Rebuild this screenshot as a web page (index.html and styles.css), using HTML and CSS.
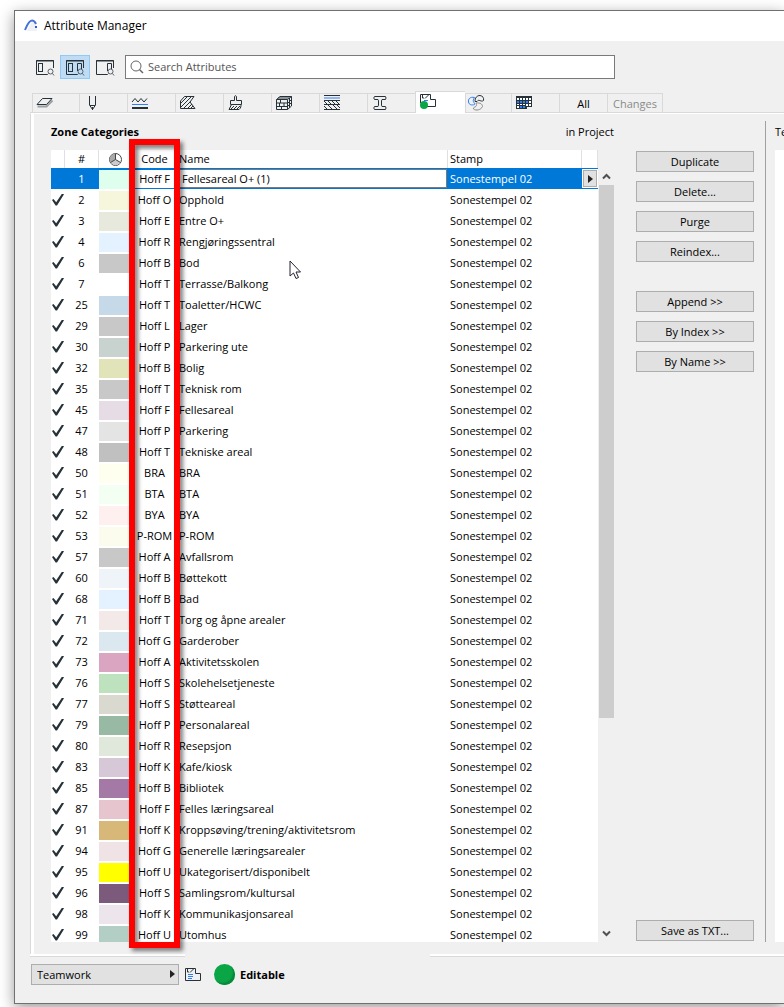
FILE: index.html
```html
<!DOCTYPE html>
<html lang="en">
<head>
  <meta charset="UTF-8" />
  <title>Attribute Manager</title>
  <link rel="stylesheet" href="styles.css">
</head>
<body>
  <div class="window">
    <header class="title-bar">
      <svg class="app-logo" width="14" height="14" viewBox="0 0 14 14" aria-hidden="true">
        <path d="M3 12C5 8 6 4 9 3L13 8V12Z" fill="#eef1f6" />
        <path d="M1 11C3 6 5 1.500 8 1.500C10.500 1.500 11 3 12 5" fill="none" stroke="#4672d8" stroke-width="2" />
        <rect x="11" y="7" width="2" height="2" fill="#2c5fd0" />
      </svg>
      <h1>Attribute Manager</h1>
    </header>

    <div class="toolbar">
      <div class="view-buttons" role="group" aria-label="View">
        <button type="button" aria-label="Left list">
          <svg width="20" height="18" viewBox="0 0 20 18">
            <path d="M12 15.500H1.500V1.500H18.500V9M1 2H19" class="ink" />
            <rect x="3.500" y="4.500" width="4" height="8" class="ink" />
            <circle cx="15.500" cy="12.500" r="2.500" class="thin" /><path d="M13.500 14.500L12 16M17.500 14.500L19 16.500" class="thin" />
          </svg>
        </button>
        <button type="button" class="active" aria-label="Both lists">
          <svg width="20" height="18" viewBox="0 0 20 18">
            <path d="M12 15.500H1.500V1.500H18.500V9M1 2H19" class="ink" />
            <rect x="3.500" y="4.500" width="4" height="8" class="ink" />
            <path d="M12.500 12V4.500H16.500V10" class="ink" />
            <circle cx="15.500" cy="12.500" r="2.500" class="thin" /><path d="M13.500 14.500L12 16M17.500 14.500L19 16.500" class="thin" />
          </svg>
        </button>
        <button type="button" aria-label="Right list">
          <svg width="20" height="18" viewBox="0 0 20 18">
            <path d="M12 15.500H1.500V1.500H18.500V9M1 2H19" class="ink" />
            <path d="M12.500 12V4.500H16.500V10" class="ink" />
            <circle cx="15.500" cy="12.500" r="2.500" class="thin" /><path d="M13.500 14.500L12 16M17.500 14.500L19 16.500" class="thin" />
          </svg>
        </button>
      </div>
      <label class="search">
        <svg width="14" height="14" viewBox="0 0 14 14" aria-hidden="true">
          <circle cx="6" cy="6" r="5" fill="none" stroke="#666" /><path d="M9.500 9.500L13 13" stroke="#666" stroke-width="1.500" />
        </svg>
        <input type="search" placeholder="Search Attributes" aria-label="Search Attributes">
      </label>
    </div>

    <nav class="tabs" aria-label="Attribute types">
      <button type="button" class="first" aria-label="Layers">
        <svg width="18" height="16" viewBox="0 0 18 16">
          <path d="M1.500 11.500H10.500L16.500 5.500" fill="none" stroke="#9aa0a4" stroke-width="2" />
          <path d="M6.500 3.500H16L10.500 9.500H1Z" class="ink" />
        </svg>
      </button>
      <button type="button" class="pen" aria-label="Pens">
        <svg width="18" height="16" viewBox="0 0 18 16">
          <path d="M5.500 1V10L8.500 14.500L11.500 10V1M6 10.500H11M8.500 12V15" class="ink" />
        </svg>
      </button>
      <button type="button" aria-label="Line types">
        <svg width="18" height="16" viewBox="0 0 18 16">
          <path d="M1 7L4 3.500L7 7L10 3.500L13 7L16 3.500" class="ink" />
          <path d="M1 9.500H17" stroke="#2d7ff9" /><path d="M1 13H17" stroke="#263238" stroke-width="2" />
        </svg>
      </button>
      <button type="button" aria-label="Fills">
        <svg width="18" height="16" viewBox="0 0 18 16">
          <path d="M5.500 1.500H15L11 7L16 13.500H1.500V6Z" class="ink" />
          <path d="M2 8L8 2M2 12L12 2M5 13L12 6M9 13L13 9M12 13L14 11" class="ink" />
        </svg>
      </button>
      <button type="button" aria-label="Surfaces">
        <svg width="18" height="16" viewBox="0 0 18 16">
          <path d="M7.500 5.500V1.500C8 .5 9 .5 9.500 1.500V5.500H14.500V9.500H3.500V5.500H7.500M4.500 9.500L2 14.500H12C14 13 14 11 14 9.500M4 14L7 11M7 14L10 11M10 14L13 11" class="ink" />
        </svg>
      </button>
      <button type="button" aria-label="Building materials">
        <svg width="18" height="16" viewBox="0 0 18 16">
          <path d="M1.500 4.500H12.500V14.500H1.500ZM1.500 4.500L5 1.500H16.500L12.500 4.500M16.500 1.500V11L12.500 14.500M1.500 8H12.500M1.500 11.500H12.500M5.500 4.500V8M9 8V11.500M4.500 8V11.500M6.500 11.500V14.500M3 3H14.500V13M13 8L16 5M13 11L16 8" class="ink" />
        </svg>
      </button>
      <button type="button" aria-label="Composites">
        <svg width="18" height="16" viewBox="0 0 18 16">
          <path d="M1 .5H17M1 5.500H17M1 9.500H17M1 14.500H17M1 6L4 9M5 6L8 9M9 6L12 9M13 6L16 9M1 11L4 14M5 10L9 14M10 10L14 14M14 10L17 13" class="ink" />
          <path d="M1 3H17" stroke="#2d7ff9" />
        </svg>
      </button>
      <button type="button" aria-label="Profiles">
        <svg width="18" height="16" viewBox="0 0 18 16">
          <path d="M3.500 1.500H14.500Q15.500 3 14.500 4.500H11Q10.500 5 10.500 6V10Q10.500 11 11 11.500H14.500Q15.500 13 14.500 14.500H3.500Q2 13 3.500 11.500H7Q7.500 11 7.500 10V6Q7.500 5 7 4.500H3.500Q2 3 3.500 1.500Z" class="ink" />
        </svg>
      </button>
      <button type="button" class="active" aria-label="Zone categories" aria-current="page">
        <svg width="18" height="16" viewBox="0 0 18 16">
          <path d="M1.500 10V1.500H11.500V6.500H16.500V13.500H8M3.500 2V5H5M6 5.500L10 1.500" class="ink" />
          <path d="M5 7.500H9" stroke="#2d7ff9" /><circle cx="5" cy="12" r="4" fill="#0aa545" />
        </svg>
      </button>
      <button type="button" class="mep" aria-label="MEP systems">
        <svg width="18" height="16" viewBox="0 0 18 16">
          <path d="M7.500 2.500C3 1.500 1 4 1.500 7C2 10 5 10.500 7.500 9.500C8 7 4.500 7.500 7.500 2.500Z" fill="none" stroke="#2d7ff9" />
          <path d="M8 6.500C8 2.500 10 .5 13 .5C16 1 17 3 16.500 5.500C14 7.500 12 3.500 10 6.500Z" class="ink" />
          <path d="M9 8C13 7.500 15.500 9 15.500 11.500C14 15 9 16 6.500 14C6 11 11 13 9 8Z" fill="none" stroke="#888" />
        </svg>
      </button>
      <button type="button" aria-label="Operation profiles">
        <svg width="18" height="16" viewBox="0 0 18 16">
          <path d="M1 1H17V12H12V14H1Z" fill="#263238" />
          <path d="M2 3h2v2H2zM5 3h2v2H5zM8 3h2v2H8zM11 3h2v2h-2zM14 3h2v2h-2zM2 9h2v1H2zM2 11h2v2H2z" fill="#fff" />
          <path d="M2 6h2v2H2zM5 6h2v2H5zM8 6h2v2H8zM11 6h2v2h-2zM5 11h2v2H5zM8 11h2v2H8z" fill="#2d7ff9" />
          <path d="M14 6h2v2h-2zM5 9h2v1H5zM8 9h2v1H8zM11 9h2v2h-2zM14 9h2v2h-2z" fill="#fff" />
        </svg>
      </button>
      <button type="button" class="text-tab">All</button>
      <button type="button" class="text-tab wide" disabled>Changes</button>
    </nav>

    <main class="panel">
      <section class="list-pane">
        <div class="pane-title"><h2>Zone Categories</h2><span>in Project</span></div>
        <div class="list">
          <div class="list-view">
            <table>
              <colgroup>
                <col class="col-check"><col class="col-id"><col class="col-color"><col class="col-code">
                <col><col class="col-stamp"><col class="col-pop">
              </colgroup>
              <thead>
                <tr>
                  <th></th>
                  <th class="ruled center">#</th>
                  <th class="ruled center">
                    <svg width="13" height="13" viewBox="0 0 13 13" role="img" aria-label="Color">
                      <circle cx="6.500" cy="6.500" r="6" fill="#fff" stroke="#444" />
                      <path d="M6.500 6.500V.5A6 6 0 0 0 1.500 9.500Z" fill="#aaa" /><path d="M6.500 6.500L1.500 9.500A6 6 0 0 0 11.500 9.500Z" fill="#ccc" />
                      <path d="M6.500 .5V6.500L1.500 9.500M6.500 6.500L11.500 9.500" fill="none" stroke="#444" />
                    </svg>
                  </th>
                  <th class="center code">Code</th>
                  <th>Name</th>
                  <th class="ruled stamp-head">Stamp</th>
                  <th class="ruled last"></th>
                </tr>
              </thead>
              <tbody id="zones"></tbody>
            </table>
          </div>
          <div class="scrollbar" aria-hidden="true">
            <svg width="9" height="7" viewBox="0 0 9 7"><path d="M1 5.500L4.500 2L8 5.500" fill="none" stroke="#505050" stroke-width="2" /></svg>
            <div class="track"><div class="thumb"></div></div>
            <svg width="9" height="7" viewBox="0 0 9 7"><path d="M1 1.500L4.500 5L8 1.500" fill="none" stroke="#505050" stroke-width="2" /></svg>
          </div>
          <div class="highlight"></div>
          <svg class="cursor" width="13" height="20" viewBox="0 0 13 20" aria-hidden="true">
            <path d="M1 1V16L4.500 13L7 18.500L9.500 17.500L7 12H11.500Z" fill="#fff" stroke="#223" />
          </svg>
        </div>
      </section>

      <div class="actions">
        <button type="button">Duplicate</button>
        <button type="button">Delete...</button>
        <button type="button">Purge</button>
        <button type="button">Reindex...</button>
        <button type="button" class="group-start">Append &gt;&gt;</button>
        <button type="button">By Index &gt;&gt;</button>
        <button type="button">By Name &gt;&gt;</button>
        <button type="button" class="save">Save as TXT...</button>
      </div>

      <section class="target-pane">
        <div class="pane-title"><span>Te</span></div>
        <div class="target-list"></div>
      </section>
    </main>
    <div class="panel-edge"><div class="edge-left"></div><div class="edge-right"></div></div>

    <footer class="status-bar">
      <div class="mode">
        <select aria-label="Mode"><option>Teamwork</option></select>
        <svg width="5" height="8" viewBox="0 0 5 8" aria-hidden="true"><path d="M0 0L5 4L0 8Z" fill="#222" /></svg>
      </div>
      <svg class="zone-icon" width="18" height="16" viewBox="0 0 18 16" aria-hidden="true">
        <path d="M1.500 1.500H11.500V6.500H16.500V13.500H1.500ZM3.500 2V5H5M6 5.500L10 1.500" class="ink" />
        <path d="M4 7.500H9M4 9.500H9M4 11.500H8" stroke="#2d7ff9" />
      </svg>
      <span class="status-dot"></span>
      <strong>Editable</strong>
    </footer>
  </div>
  <script src="script.js"></script>
</body>
</html>
```

FILE: styles.css
```css
* {
  box-sizing: border-box;
}

body {
  margin: 0;
  height: 100vh;
  padding: 10px 0 3px 14px;
  display: flex;
  overflow: hidden;
  background: #fff;
  color: #000;
  font-family: "Open Sans", "Noto Sans", sans-serif;
  font-size: 11px;
  line-height: 16px;
}

button,
input,
select {
  font: inherit;
  color: inherit;
}

h1,
h2 {
  margin: 0;
  font-size: 12px;
  font-weight: 400;
}

.ink {
  fill: none;
  stroke: #263238;
}

.thin {
  fill: none;
  stroke: #55606a;
}

.window {
  flex: 1;
  min-width: 0;
  display: flex;
  flex-direction: column;
  background: #f0f0f0;
  border: 1px solid #707070;
  border-right: 0;
  box-shadow: 0 4px 14px rgba(0, 0, 0, 0.4);
}

.title-bar {
  height: 30px;
  padding-left: 9px;
  display: flex;
  align-items: center;
  gap: 6px;
  background: #fff;
}

/* Toolbar */
.toolbar {
  display: flex;
  align-items: center;
  gap: 5px;
  padding: 14px 169px 0 15px;
}

.view-buttons {
  display: flex;
}

.view-buttons button {
  width: 30px;
  height: 24px;
  padding: 3px 4px;
  background: none;
  border: 1px solid transparent;
}

.view-buttons svg {
  display: block;
}

.view-buttons .active {
  background: #bfdcf4;
  border-color: #90c8f6;
}

.search {
  flex: 1;
  height: 24px;
  padding: 0 4px;
  display: flex;
  align-items: center;
  gap: 4px;
  background: #fff;
  border: 1px solid #7a7a7a;
}

.search input {
  flex: 1;
  padding: 0;
  border: 0;
  outline: 0;
  background: none;
}

.search input::placeholder {
  color: #555;
  opacity: 1;
}

/* Tabs */
.tabs {
  display: flex;
  align-items: flex-end;
  margin: 12px 0 0 15px;
  padding-left: 2px;
  border-bottom: 1px solid #d9d9d9;
}

.tabs button {
  width: 48px;
  height: 19px;
  padding: 0 0 0 3px;
  display: flex;
  align-items: center;
  background: #f0f0f0;
  border: solid #d9d9d9;
  border-width: 1px 0 0 1px;
}

.tabs .first {
  width: 47px;
}

.tabs .pen {
  padding-left: 4px;
}

.tabs .active {
  height: 22px;
  width: 50px;
  margin-bottom: -1px;
  padding-bottom: 4px;
  background: #fff;
}

.tabs .mep {
  width: 46px;
  padding-left: 1px;
}

.tabs .text-tab {
  justify-content: center;
  padding: 2px 0 0;
}

.tabs .wide {
  width: 56px;
  border-right-width: 1px;
  color: #8a8a8a;
}

/* Panel */
.panel {
  flex: 1;
  min-height: 0;
  display: flex;
  margin-left: 15px;
  padding: 7px 0 12px 17px;
  border-left: 1px solid #d9d9d9;
  border-top: 1px solid #fff;
  box-shadow: inset 3px 0 #fff;
}

.list-pane {
  flex: 1;
  min-width: 0;
  display: flex;
  flex-direction: column;
  padding-left: 3px;
}

.pane-title {
  height: 29px;
  padding-top: 3px;
  display: flex;
  justify-content: space-between;
}

.pane-title h2 {
  font-size: 11px;
  font-weight: 700;
}

.list {
  position: relative;
  flex: 1;
  min-height: 0;
  display: flex;
}

.list-view {
  flex: 1;
  min-width: 0;
  overflow: hidden;
  background: #fff;
}

table {
  width: 100%;
  table-layout: fixed;
  border-collapse: separate;
  border-spacing: 0;
}

.col-check { width: 13px; }
.col-id { width: 34px; }
.col-color { width: 34px; }
.col-code { width: 47px; }
.col-stamp { width: 134px; }
.col-pop { width: 17px; }

th,
td {
  padding: 0;
  text-align: left;
  font-weight: 400;
  white-space: nowrap;
}

th {
  height: 18px;
}

th svg {
  display: block;
  margin: 0 auto;
}

td {
  height: 21px;
}

.ruled {
  border-left: 1px solid #e0e0e0;
}

.last {
  border-right: 1px solid #e0e0e0;
}

.center {
  text-align: center;
}

.code {
  padding-right: 2px;
}

.id {
  padding-left: 1px;
}

.stamp-head {
  padding-left: 2px;
}

.stamp {
  padding-left: 3px;
}

.tick {
  appearance: none;
  display: block;
  width: 12px;
  height: 12px;
  margin: 0 0 0 1px;
}

.tick:checked {
  background: #263238;
  clip-path: polygon(0 55%, 12% 45%, 35% 72%, 84% 0, 100% 6%, 42% 100%, 30% 100%);
}

.swatch {
  height: 19px;
  margin: 2px 0 0 1px;
}

/* Row being edited */
.selected td {
  background: #0078d7;
  color: #fff;
}

.selected .code {
  background: #fff;
  color: #000;
  border: solid #0078d7;
  border-width: 2px 0 1px;
}

.selected input {
  display: block;
  width: 100%;
  height: 19px;
  padding: 0 2px;
  background: #fff;
  border: 1px solid #7a7a7a;
  outline: 0;
  color: #000;
}

.popup {
  display: flex;
  align-items: center;
  justify-content: center;
  width: 14px;
  height: 17px;
  margin-left: 2px;
  padding: 0;
  background: #e1e1e1;
  border: 1px solid #adadad;
  box-shadow: 0 0 0 1px #fff;
}

.scrollbar {
  width: 15px;
  margin: 18px 0 0 1px;
  display: flex;
  flex-direction: column;
  align-items: center;
  padding: 5px 0;
}

.track {
  flex: 1;
  align-self: stretch;
  margin: 5px 0;
}

.thumb {
  height: 72%;
  background: #cdcdcd;
}

.highlight {
  position: absolute;
  top: -11px;
  bottom: -6px;
  left: 78px;
  width: 51px;
  border: 6px solid #f00;
  filter: drop-shadow(3px 3px 2px rgba(0, 0, 0, 0.5));
}

.cursor {
  position: absolute;
  top: 110px;
  left: 238px;
}

/* Buttons between the lists */
.actions {
  width: 118px;
  margin: 30px 11px 0 22px;
  display: flex;
  flex-direction: column;
  gap: 9px;
}

.actions button {
  height: 21px;
  padding: 0;
  background: #e1e1e1;
  border: 1px solid #adadad;
}

.actions .group-start {
  margin-top: 20px;
}

.actions .save {
  margin-top: auto;
  margin-bottom: 1px;
}

.target-pane {
  width: 19px;
  display: flex;
  flex-direction: column;
  padding-left: 9px;
  border-left: 1px solid #a0a0a0;
  overflow: hidden;
}

.target-list {
  flex: 1;
  background: #fff;
}

.panel-edge {
  display: flex;
  justify-content: space-between;
  margin-left: 15px;
}

.edge-left,
.edge-right {
  height: 3px;
  background: #fff;
  border-bottom: 1px solid #d9d9d9;
}

.edge-left {
  width: 155px;
}

.edge-right {
  width: 354px;
}

/* Status bar */
.status-bar {
  display: flex;
  align-items: center;
  padding: 7px 0 18px 16px;
}

.mode {
  position: relative;
  width: 148px;
}

.mode select {
  appearance: none;
  display: block;
  width: 100%;
  height: 21px;
  padding: 0 5px;
  background: #e1e1e1;
  border: 1px solid #adadad;
  border-radius: 0;
}

.mode svg {
  position: absolute;
  top: 6px;
  right: 4px;
}

.zone-icon {
  margin: 0 12px 0 5px;
}

.status-dot {
  width: 21px;
  height: 21px;
  margin-right: 5px;
  border-radius: 50%;
  background: #0aa545;
  box-shadow: inset -2px -2px 1px #078a3a;
}
```

FILE: script.js
```js
// index, code, name, color
const zones = [
  [1, 'Hoff F', 'Fellesareal O+ (1)', '#dfffee'],
  [2, 'Hoff O', 'Opphold', '#f6f6dc'],
  [3, 'Hoff E', 'Entre O+', '#e7e9dd'],
  [4, 'Hoff R', 'Rengjøringssentral', '#e4f2ff'],
  [6, 'Hoff B', 'Bod', '#c8c8c8'],
  [7, 'Hoff T', 'Terrasse/Balkong', '#ffffff'],
  [25, 'Hoff T', 'Toaletter/HCWC', '#c5d9e8'],
  [29, 'Hoff L', 'Lager', '#c8c8c8'],
  [30, 'Hoff P', 'Parkering ute', '#c8d2ce'],
  [32, 'Hoff B', 'Bolig', '#e1e3b8'],
  [35, 'Hoff T', 'Teknisk rom', '#c8c8c8'],
  [45, 'Hoff F', 'Fellesareal', '#e6dce6'],
  [47, 'Hoff P', 'Parkering', '#e4e4e4'],
  [48, 'Hoff T', 'Tekniske areal', '#c0c0c0'],
  [50, 'BRA', 'BRA', '#fffff0'],
  [51, 'BTA', 'BTA', '#f2fff2'],
  [52, 'BYA', 'BYA', '#fff0f0'],
  [53, 'P-ROM', 'P-ROM', '#fbfbee'],
  [57, 'Hoff A', 'Avfallsrom', '#c8c8c8'],
  [60, 'Hoff B', 'Bøttekott', '#eff4f9'],
  [68, 'Hoff B', 'Bad', '#e4f1ff'],
  [71, 'Hoff T', 'Torg og åpne arealer', '#f4e9e9'],
  [72, 'Hoff G', 'Garderober', '#dce8f0'],
  [73, 'Hoff A', 'Aktivitetsskolen', '#daa5c0'],
  [76, 'Hoff S', 'Skolehelsetjeneste', '#bee1be'],
  [77, 'Hoff S', 'Støtteareal', '#d9d9cf'],
  [79, 'Hoff P', 'Personalareal', '#98baa4'],
  [80, 'Hoff R', 'Resepsjon', '#e0e8dc'],
  [83, 'Hoff K', 'Kafe/kiosk', '#d7c8d8'],
  [85, 'Hoff B', 'Bibliotek', '#a579a5'],
  [87, 'Hoff F', 'Felles læringsareal', '#e6c5cf'],
  [91, 'Hoff K', 'Kroppsøving/trening/aktivitetsrom', '#d7b878'],
  [94, 'Hoff G', 'Generelle læringsarealer', '#f0e3e5'],
  [95, 'Hoff U', 'Ukategorisert/disponibelt', '#ffff00'],
  [96, 'Hoff S', 'Samlingsrom/kultursal', '#7b5a7b'],
  [98, 'Hoff K', 'Kommunikasjonsareal', '#ece6ec'],
  [99, 'Hoff U', 'Utomhus', '#b3cfc5']
];

const popup = `<button type="button" class="popup" aria-label="Choose stamp">
  <svg width="5" height="8" viewBox="0 0 5 8"><path d="M0 0L5 4L0 8Z" fill="#222" /></svg>
</button>`;

document.getElementById('zones').innerHTML = zones.map(([id, code, name, color], i) => {
  const selected = i === 0;
  return `<tr class="${selected ? 'selected' : ''}">
    <td>${selected ? '' : `<input type="checkbox" class="tick" checked aria-label="${name}">`}</td>
    <td class="center id">${id}</td>
    <td><div class="swatch" style="background: ${color}"></div></td>
    <td class="center code">${code}</td>
    <td>${selected ? `<input type="text" value="${name}" aria-label="Name">` : name}</td>
    <td class="stamp">Sonestempel 02</td>
    <td>${selected ? popup : ''}</td>
  </tr>`;
}).join('');
```
